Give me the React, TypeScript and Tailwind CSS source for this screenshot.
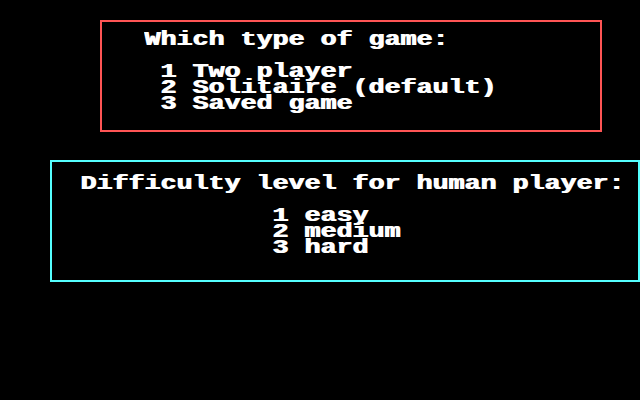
import React from 'react';

// One row of the 40-column text screen: 16px cells, glyphs stretched wide like the BIOS font
function Row({ text }: { text: string }) {
  return (
    <div className="h-4 leading-4 whitespace-pre">
      <span className="inline-block origin-left scale-x-[1.333] text-[20px] leading-4 font-bold [text-shadow:1px_0_0_#fff]">
        {text}
      </span>
    </div>
  );
}

export default function App() {
  return (
    <div
      className="w-[640px] h-[400px] bg-black text-white overflow-hidden"
      style={{ fontFamily: '"Liberation Mono", "DejaVu Sans Mono", monospace' }}
    >
      {/* game type menu */}
      <div className="ml-[100px] mt-5 w-[502px] h-[112px] border-2 border-[#ff5555]">
        <div className="pl-[42px] pt-[10px]">
          <Row text="Which type of game:" />
        </div>
        <div className="pl-[58px] pt-4">
          <Row text="1 Two player" />
          <Row text="2 Solitaire (default)" />
          <Row text="3 Saved game" />
        </div>
      </div>

      {/* difficulty menu */}
      <div className="ml-[50px] mt-7 w-[590px] h-[122px] border-2 border-[#55ffff]">
        <div className="pl-[28px] pt-[14px]">
          <Row text="Difficulty level for human player:" />
        </div>
        <div className="pl-[220px] pt-4">
          <Row text="1 easy" />
          <Row text="2 medium" />
          <Row text="3 hard" />
        </div>
      </div>
    </div>
  );
}
